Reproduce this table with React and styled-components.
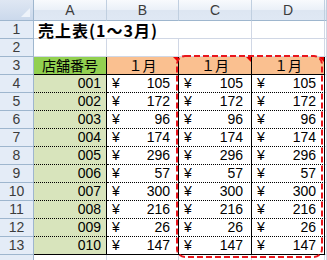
import styled, { createGlobalStyle } from 'styled-components';

const GlobalStyle = createGlobalStyle`
    html, body {
        margin: 0;
        padding: 0;
        background: #fff;
    }
    body {
        width: 327px;
        height: 260px;
        overflow: hidden;
        font-family: "Liberation Sans", "Noto Sans CJK JP", sans-serif;
    }
`

const Sheet = styled.div`
    position: relative;
    display: grid;
    grid-template-columns: 34px 73px 72px 73px 73px 1fr;
    grid-template-rows: 21px repeat(14, 18px);
    width: 327px;
    height: 260px;
    overflow: hidden;
`

const Cell = styled.div`
    box-sizing: border-box;
    border-right: 1px solid #d0d7e5;
    border-bottom: 1px solid #d0d7e5;
    font-size: 14px;
    line-height: 17px;
    color: #000;
    white-space: nowrap;
`

const Corner = styled(Cell)`
    position: relative;
    background: linear-gradient(#dfe7f3, #cbd9ec);
    border-right-color: #9eb6ce;
    border-bottom-color: #9eb6ce;
`

const CornerMark = styled.svg`
    position: absolute;
    right: 3px;
    bottom: 3px;
`

const ColHead = styled(Cell)`
    background: linear-gradient(#f8fafd 0%, #eaf0f8 50%, #dde6f2 51%, #dfe8f4 100%);
    border-right-color: #c0cfe0;
    border-bottom-color: #9eb6ce;
    color: #3c3c3c;
    text-align: center;
    line-height: 20px;
`

const RowHead = styled(Cell)`
    background: #e4ecf7;
    border-right-color: #9eb6ce;
    border-bottom-color: #9eb6ce;
    color: #3c3c3c;
    text-align: center;
`

// CJK cells keep the gothic face
const Title = styled(Cell)`
    grid-column: span 2;
    border-right: none;
    padding-left: 4px;
    font-family: "Noto Sans CJK JP", sans-serif;
    font-size: 16px;
    font-weight: bold;
    letter-spacing: 1px;
    line-height: 18px;
`

const Head = styled(Cell)`
    position: relative;
    background: ${p => p.$green ? '#92d050' : '#fac090'};
    border-right-color: #000;
    border-bottom-color: #000;
    text-align: center;
    font-family: "Noto Sans CJK JP", sans-serif;
`

const Comment = styled.span`
    position: absolute;
    top: 0;
    right: 0;
    width: 0;
    height: 0;
    border-top: 5px solid #e00;
    border-left: 5px solid transparent;
`

const Code = styled(Cell)`
    background: #d8e4bc;
    border-right-color: #000;
    border-bottom: 1px ${p => p.$last ? 'solid' : 'dotted'} #000;
    text-align: right;
    padding-right: 5px;
`

const Money = styled(Cell)`
    display: flex;
    justify-content: space-between;
    background: #fff;
    border-right-color: #000;
    border-bottom: 1px ${p => p.$last ? 'solid' : 'dotted'} #000;
    padding: 0 8px 0 5px;
`

const Marquee = styled.svg`
    position: absolute;
    left: 0;
    top: 0;
    pointer-events: none;
`

const sales = [105, 172, 96, 174, 296, 57, 300, 216, 26, 147]
const cols = ['A', 'B', 'C', 'D', '']

function Blank() {
    return <Cell />
}

export default function App() {
    return (
        <>
            <GlobalStyle />
            <Sheet>
                <Corner>
                    <CornerMark width="9" height="9" viewBox="0 0 9 9">
                        <path d="M9 0 L9 9 L0 9 Z" fill="#eef3fa" />
                    </CornerMark>
                </Corner>
                {cols.map((c, i) => <ColHead key={i}>{c}</ColHead>)}

                <RowHead>1</RowHead>
                <Title>売上表(1～3月)</Title>
                <Blank /><Blank /><Blank />

                <RowHead>2</RowHead>
                <Blank /><Blank /><Blank /><Blank /><Blank />

                <RowHead>3</RowHead>
                <Head $green>店舗番号</Head>
                <Head>１月<Comment /></Head>
                <Head>１月<Comment /></Head>
                <Head>１月<Comment /></Head>
                <Blank />

                {sales.map((v, i) => {
                    const last = i === sales.length - 1
                    const code = String(i + 1).padStart(3, '0')
                    return [
                        <RowHead key={'r' + i}>{i + 4}</RowHead>,
                        <Code key={'a' + i} $last={last}>{code}</Code>,
                        ...[0, 1, 2].map(k => (
                            <Money key={'m' + i + k} $last={last}>
                                <span>¥</span><span>{v}</span>
                            </Money>
                        )),
                        <Blank key={'e' + i} />,
                    ]
                })}

                <RowHead />
                <Blank /><Blank /><Blank /><Blank /><Blank />

                <Marquee width="327" height="260">
                    <rect x="177" y="56" width="145" height="201" rx="8" ry="8"
                        fill="none" stroke="#e8161c" strokeWidth="2" strokeDasharray="6 3" />
                </Marquee>
            </Sheet>
        </>
    );
}
